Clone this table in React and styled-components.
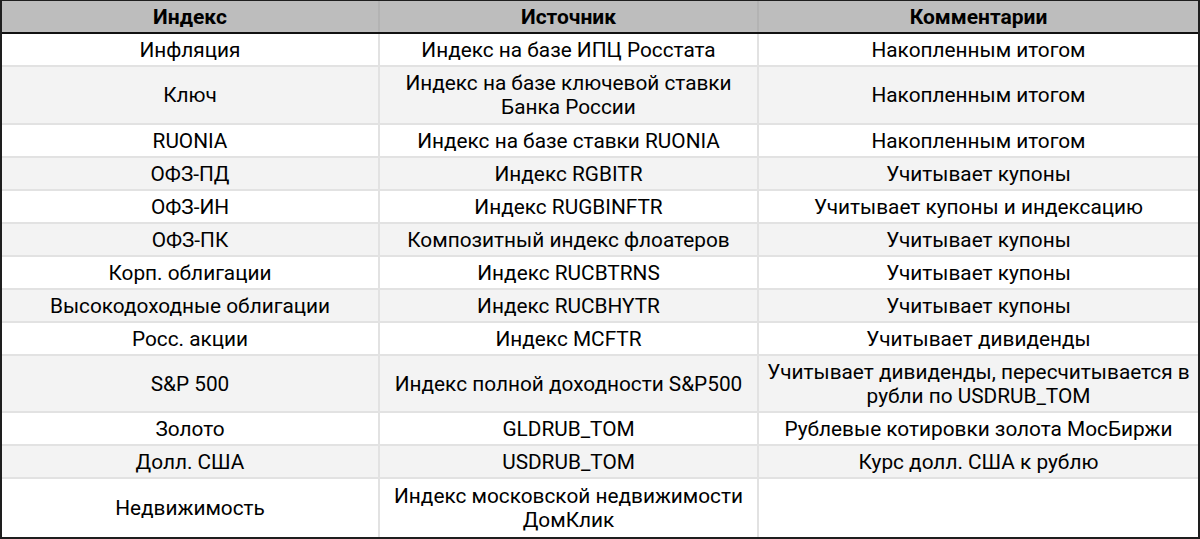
import React from "react";
import styled, { createGlobalStyle } from "styled-components";

const rows = [
  { name: "Инфляция", source: "Индекс на базе ИПЦ Росстата", note: "Накопленным итогом", h: 33 },
  { name: "Ключ", source: "Индекс на базе ключевой ставки Банка России", note: "Накопленным итогом", h: 58 },
  { name: "RUONIA", source: "Индекс на базе ставки RUONIA", note: "Накопленным итогом", h: 33 },
  { name: "ОФЗ-ПД", source: "Индекс RGBITR", note: "Учитывает купоны", h: 33 },
  { name: "ОФЗ-ИН", source: "Индекс RUGBINFTR", note: "Учитывает купоны и индексацию", h: 33 },
  { name: "ОФЗ-ПК", source: "Композитный индекс флоатеров", note: "Учитывает купоны", h: 33 },
  { name: "Корп. облигации", source: "Индекс RUCBTRNS", note: "Учитывает купоны", h: 33 },
  { name: "Высокодоходные облигации", source: "Индекс RUCBHYTR", note: "Учитывает купоны", h: 33 },
  { name: "Росс. акции", source: "Индекс MCFTR", note: "Учитывает дивиденды", h: 33 },
  { name: "S&P 500", source: "Индекс полной доходности S&P500", note: "Учитывает дивиденды, пересчитывается в рубли по USDRUB_TOM", h: 57 },
  { name: "Золото", source: "GLDRUB_TOM", note: "Рублевые котировки золота МосБиржи", h: 33 },
  { name: "Долл. США", source: "USDRUB_TOM", note: "Курс долл. США к рублю", h: 33 },
  { name: "Недвижимость", source: "Индекс московской недвижимости ДомКлик", note: "", h: 60 },
];

export default function App() {
  return (
    <>
      <GlobalStyle />
      <Table>
        <HeadRow>
          <HeadCell>Индекс</HeadCell>
          <HeadCell>Источник</HeadCell>
          <HeadCell>Комментарии</HeadCell>
        </HeadRow>
        {rows.map((r, i) => (
          <Row key={r.name} h={r.h} $odd={i % 2 === 1} $last={i === rows.length - 1}>
            <Cell>{r.name}</Cell>
            <Cell>{r.source}</Cell>
            <Cell>{r.note}</Cell>
          </Row>
        ))}
      </Table>
    </>
  );
}

const GlobalStyle = createGlobalStyle`
  body {
    margin: 0;
    background: #fff;
    font-family: Roboto, "Noto Sans", sans-serif;
  }
`;

const Table = styled.div`
  box-sizing: border-box;
  width: 1200px;
  height: 539px;
  overflow: hidden;
  border-left: 2px solid #1e1e1e;
  border-right: 2px solid #1e1e1e;
  border-top: 1px solid #1e1e1e;
  color: #000;
`;

const HeadRow = styled.div`
  box-sizing: border-box;
  display: grid;
  grid-template-columns: 378px 379px 1fr;
  height: 33px;
  background: #bdbdbd;
  border-bottom: 2px solid #111;
`;

const HeadCell = styled.div`
  display: flex;
  align-items: center;
  justify-content: center;
  font-weight: 700;
  font-size: 21px;
  border-right: 2px solid #b3b3b3;
  &:last-child {
    border-right: none;
  }
`;

const Row = styled.div`
  box-sizing: border-box;
  display: grid;
  grid-template-columns: 378px 379px 1fr;
  height: ${(p) => p.h}px;
  background: ${(p) => (p.$odd ? "#f3f3f3" : "#fff")};
  border-bottom: 2px solid ${(p) => (p.$last ? "#1e1e1e" : "#e2e2e2")};
`;

const Cell = styled.div`
  display: flex;
  align-items: center;
  justify-content: center;
  text-align: center;
  padding: 0 4px;
  font-size: 20.8px;
  line-height: 24px;
  border-right: 2px solid #e2e2e2;
  &:last-child {
    border-right: none;
  }
`;
